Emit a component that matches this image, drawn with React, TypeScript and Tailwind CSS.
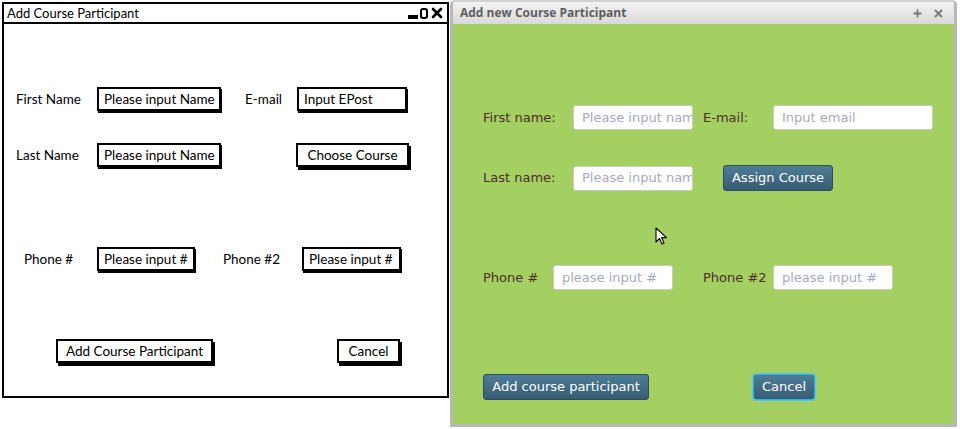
import React from 'react';

const sketchFont = { fontFamily: 'Lato, "Open Sans", sans-serif' };
const fxFont = { fontFamily: '"DejaVu Sans", Verdana, sans-serif' };

const SketchField: React.FC<{ w: string; text: string; className?: string }> = ({ w, text, className }) => (
  <div className={`${w} ${className ?? ''} h-6 border-2 border-black bg-white shadow-[1px_2px_0_#000] flex items-center pl-[5px] text-[13.5px] text-black whitespace-nowrap overflow-hidden`}>
    {text}
  </div>
);

const SketchButton: React.FC<{ w: string; text: string; className?: string }> = ({ w, text, className }) => (
  <div className={`${w} ${className ?? ''} h-6 border-2 border-black bg-white shadow-[2px_3px_0_#000] flex items-center justify-center text-[13.5px] text-black whitespace-nowrap`}>
    {text}
  </div>
);

const Wireframe: React.FC = () => (
  <div className="ml-[2px] mt-[2px] w-[447px] h-[396px] border-2 border-black bg-white flex flex-col" style={sketchFont}>
    <div className="h-[20px] border-b-2 border-black flex items-center justify-between pl-[3px] pr-[4px]">
      <span className="text-[13px] text-black leading-none">Add Course Participant</span>
      <div className="flex items-center gap-[2px]">
        <div className="w-[10px] h-[4px] bg-black mt-[7px]" />
        <div className="w-[8px] h-[11px] border-2 border-black rounded-[3px]" />
        <svg width="12" height="12" viewBox="0 0 12 12" className="ml-[1px]">
          <path d="M2 2 L10 10 M10 2 L2 10" stroke="#000" strokeWidth="2.6" strokeLinecap="round" />
        </svg>
      </div>
    </div>

    <div className="flex items-center mt-[63px]">
      <span className="ml-[12px] w-[81px] text-[13.5px]">First Name</span>
      <SketchField w="w-[124px]" text="Please input Name" />
      <span className="ml-[24px] w-[52px] text-[13.5px]">E-mail</span>
      <SketchField w="w-[110px]" text="Input EPost" />
    </div>

    <div className="flex items-center mt-[32px]">
      <span className="ml-[12px] w-[81px] text-[13.5px]">Last Name</span>
      <SketchField w="w-[124px]" text="Please input Name" />
      <SketchButton w="w-[113px]" text="Choose Course" className="ml-[75px]" />
    </div>

    <div className="flex items-center mt-[80px]">
      <span className="ml-[20px] w-[73px] text-[13.5px]">Phone #</span>
      <SketchField w="w-[98px]" text="Please input #" />
      <span className="ml-[28px] w-[79px] text-[13.5px]">Phone #2</span>
      <SketchField w="w-[99px]" text="Please input #" />
    </div>

    <div className="flex items-center mt-[68px]">
      <SketchButton w="w-[157px]" text="Add Course Participant" className="ml-[52px]" />
      <SketchButton w="w-[63px]" text="Cancel" className="ml-[124px]" />
    </div>
  </div>
);

const FxField: React.FC<{ w: string; placeholder: string; className?: string }> = ({ w, placeholder, className }) => (
  <div className={`${w} ${className ?? ''} h-[25px] bg-white border border-[#c9cfc0] rounded-[3px] flex items-center pl-[8px] text-[13px] text-[#a7a9c0] whitespace-nowrap overflow-hidden`}>
    {placeholder}
  </div>
);

const FxButton: React.FC<{ w: string; text: string; className?: string; focused?: boolean }> = ({ w, text, className, focused }) => (
  <div
    className={`${w} ${className ?? ''} h-[26px] rounded-[3px] bg-gradient-to-b from-[#4f7d96] to-[#365d73] border ${
      focused ? 'border-[#29b6e6] shadow-[0_0_0_1px_#55c6ee]' : 'border-[#2e4c5d]'
    } flex items-center justify-center text-[13px] text-white whitespace-nowrap`}
  >
    {text}
  </div>
);

const FxLabel: React.FC<{ w: string; text: string; className?: string }> = ({ w, text, className }) => (
  <span className={`${w} ${className ?? ''} text-[13px] text-[#4d2d2a] whitespace-nowrap`}>{text}</span>
);

const FxWindow: React.FC = () => (
  <div className="ml-[1px] w-[507px] h-[427px] rounded-t-[5px] border-[3px] border-t-2 border-[#b8b8b8] border-t-[#d0d0d0] flex flex-col overflow-hidden" style={fxFont}>
    <div className="h-[22px] bg-gradient-to-b from-[#f2f2f2] to-[#d9d9d9] flex items-center justify-between pl-[7px] pr-[11px]">
      <span className="text-[12px] font-bold text-[#5e5e5e] leading-none" style={{ fontFamily: '"Open Sans", "DejaVu Sans", sans-serif' }}>
        Add new Course Participant
      </span>
      <div className="flex items-center gap-[12px] text-[#7a7a7a]">
        <svg width="9" height="9" viewBox="0 0 9 9">
          <path d="M4.5 0.5 V8.5 M0.5 4.5 H8.5" stroke="#777" strokeWidth="1.8" />
        </svg>
        <svg width="9" height="9" viewBox="0 0 9 9">
          <path d="M1 1 L8 8 M8 1 L1 8" stroke="#777" strokeWidth="1.8" />
        </svg>
      </div>
    </div>
    <div className="relative flex-1 bg-[#a4cf61] flex flex-col">
      <div className="flex items-center mt-[81px]">
        <FxLabel w="w-[90px]" text="First name:" className="ml-[30px]" />
        <FxField w="w-[120px]" placeholder="Please input name" />
        <FxLabel w="w-[70px]" text="E-mail:" className="ml-[10px]" />
        <FxField w="w-[160px]" placeholder="Input email" />
      </div>

      <div className="flex items-center mt-[35px]">
        <FxLabel w="w-[90px]" text="Last name:" className="ml-[30px]" />
        <FxField w="w-[120px]" placeholder="Please input name" />
        <FxButton w="w-[110px]" text="Assign Course" className="ml-[30px]" />
      </div>

      <div className="flex items-center mt-[74px]">
        <FxLabel w="w-[70px]" text="Phone #" className="ml-[30px]" />
        <FxField w="w-[120px]" placeholder="please input #" />
        <FxLabel w="w-[70px]" text="Phone #2" className="ml-[30px]" />
        <FxField w="w-[120px]" placeholder="please input #" />
      </div>

      <div className="flex items-center mt-[84px]">
        <FxButton w="w-[166px]" text="Add course participant" className="ml-[30px]" />
        <FxButton w="w-[62px]" text="Cancel" className="ml-[104px]" focused />
      </div>

      {/* mouse pointer */}
      <svg className="absolute left-[202px] top-[203px]" width="13" height="19" viewBox="0 0 13 19">
        <path d="M1 1 L1 15 L4.5 11.5 L7 17 L9 16 L6.6 10.6 L11.5 10.6 Z" fill="#fff" stroke="#000" strokeWidth="1.1" strokeLinejoin="round" />
      </svg>
    </div>
  </div>
);

const App: React.FC = () => {
  return (
    <div className="w-[960px] h-[429px] bg-white flex items-start overflow-hidden">
      <Wireframe />
      <FxWindow />
    </div>
  );
};

export default App;
